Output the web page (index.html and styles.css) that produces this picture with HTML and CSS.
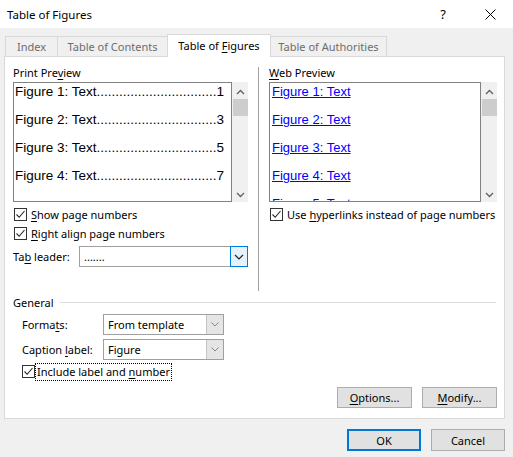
FILE: index.html
```html
<!DOCTYPE html>
<html lang="en">

<head>
    <meta charset="UTF-8">
    <title>Table of Figures</title>
    <link rel="stylesheet" href="styles.css">
</head>

<body>
    <div class="dialog">
        <div class="titlebar">
            <span class="title">Table of Figures</span>
            <span class="help">?</span>
            <svg class="close" width="11" height="11" viewBox="0 0 11 11">
                <path d="M0.5 0.5 L10.5 10.5 M10.5 0.5 L0.5 10.5" stroke="#000" stroke-width="1" fill="none" />
            </svg>
        </div>

        <ul class="tabs">
            <li><span>Index</span></li>
            <li><span>Table of Contents</span></li>
            <li class="active"><span>Table of <u>F</u>igures</span></li>
            <li><span>Table of Authorities</span></li>
        </ul>

        <div class="panel">
            <div class="top">
                <div class="col left">
                    <div class="label">Print Pre<u>v</u>iew</div>
                    <div class="listbox">
                        <div class="list print">
                            <div class="entry"><span>Figure 1: Text</span><span>................................</span><span>1</span></div>
                            <div class="entry"><span>Figure 2: Text</span><span>................................</span><span>3</span></div>
                            <div class="entry"><span>Figure 3: Text</span><span>................................</span><span>5</span></div>
                            <div class="entry"><span>Figure 4: Text</span><span>................................</span><span>7</span></div>
                        </div>
                        <div class="scrollbar">
                            <svg width="9" height="6" viewBox="0 0 9 6"><path d="M1 5 L4.5 1.5 L8 5" stroke="#606060" stroke-width="1.3" fill="none" /></svg>
                            <div class="thumb"></div>
                            <div class="spacer"></div>
                            <svg width="9" height="6" viewBox="0 0 9 6"><path d="M1 1 L4.5 4.5 L8 1" stroke="#606060" stroke-width="1.3" fill="none" /></svg>
                        </div>
                    </div>
                    <div class="check"><span class="box"><svg width="11" height="11" viewBox="0 0 11 11"><path d="M1.5 5.5 L4.2 8.3 L9.5 2" stroke="#222" stroke-width="1.1" fill="none" /></svg></span><span><u>S</u>how page numbers</span></div>
                    <div class="check"><span class="box"><svg width="11" height="11" viewBox="0 0 11 11"><path d="M1.5 5.5 L4.2 8.3 L9.5 2" stroke="#222" stroke-width="1.1" fill="none" /></svg></span><span><u>R</u>ight align page numbers</span></div>
                    <div class="row leader">
                        <span class="rowlabel">Ta<u>b</u> leader:</span>
                        <div class="combo focus">
                            <span class="value">.......</span>
                            <span class="arrow"><svg width="10" height="6" viewBox="0 0 10 6"><path d="M1 1 L5 5 L9 1" stroke="#222" stroke-width="1.2" fill="none" /></svg></span>
                        </div>
                    </div>
                </div>
                <div class="divider"></div>
                <div class="col right">
                    <div class="label"><u>W</u>eb Preview</div>
                    <div class="listbox">
                        <div class="list web">
                            <div class="link">Figure 1: Text</div>
                            <div class="link">Figure 2: Text</div>
                            <div class="link">Figure 3: Text</div>
                            <div class="link">Figure 4: Text</div>
                            <div class="link last">Figure 5: Text</div>
                        </div>
                        <div class="scrollbar">
                            <svg width="9" height="6" viewBox="0 0 9 6"><path d="M1 5 L4.5 1.5 L8 5" stroke="#606060" stroke-width="1.3" fill="none" /></svg>
                            <div class="thumb"></div>
                            <div class="spacer"></div>
                            <svg width="9" height="6" viewBox="0 0 9 6"><path d="M1 1 L4.5 4.5 L8 1" stroke="#606060" stroke-width="1.3" fill="none" /></svg>
                        </div>
                    </div>
                    <div class="check"><span class="box"><svg width="11" height="11" viewBox="0 0 11 11"><path d="M1.5 5.5 L4.2 8.3 L9.5 2" stroke="#222" stroke-width="1.1" fill="none" /></svg></span><span>Use <u>h</u>yperlinks instead of page numbers</span></div>
                </div>
            </div>

            <div class="general">
                <div class="group-title"><span>General</span></div>
                <div class="row first">
                    <span class="rowlabel">Forma<u>t</u>s:</span>
                    <div class="combo">
                        <span class="value">From template</span>
                        <span class="arrow"><svg width="8" height="5" viewBox="0 0 8 5"><path d="M0.5 0.5 L4 4 L7.5 0.5" stroke="#888" stroke-width="1" fill="none" /></svg></span>
                    </div>
                </div>
                <div class="row">
                    <span class="rowlabel">Caption <u>l</u>abel:</span>
                    <div class="combo">
                        <span class="value">Figure</span>
                        <span class="arrow"><svg width="8" height="5" viewBox="0 0 8 5"><path d="M0.5 0.5 L4 4 L7.5 0.5" stroke="#888" stroke-width="1" fill="none" /></svg></span>
                    </div>
                </div>
                <div class="check include"><span class="box"><svg width="11" height="11" viewBox="0 0 11 11"><path d="M1.5 5.5 L4.2 8.3 L9.5 2" stroke="#222" stroke-width="1.1" fill="none" /></svg></span><span class="focused">Include label and <u>n</u>umber</span></div>
            </div>

            <div class="panel-buttons">
                <button class="btn"><u>O</u>ptions...</button>
                <button class="btn"><u>M</u>odify...</button>
            </div>
        </div>

        <div class="footer">
            <button class="btn ok">OK</button>
            <button class="btn">Cancel</button>
        </div>
    </div>
</body>

</html>
```

FILE: styles.css
```css
* {
    margin: 0;
    padding: 0;
    box-sizing: border-box;
}

ul,
li {
    list-style: none;
}

body {
    width: 513px;
    height: 457px;
    background-color: #f0f0f0;
    font-family: "Noto Sans", "Open Sans", sans-serif;
    font-size: 11px;
    color: #000;
    white-space: nowrap;
    overflow: hidden;
}

u {
    text-decoration: underline;
    text-underline-offset: 2px;
}

.titlebar {
    height: 28px;
    background-color: #fff;
    display: flex;
    align-items: center;
    padding-left: 7px;
}

.title {
    flex: 1;
    font-size: 11.5px;
}

.help {
    font-size: 13px;
    margin-right: 39px;
}

.close {
    margin-right: 17px;
}

/* tabs */
.tabs {
    display: flex;
    align-items: flex-end;
    height: 28px;
    padding-left: 5px;
}

.tabs>li {
    height: 20px;
    border: 1px solid #d9d9d9;
    border-bottom: none;
    border-left: none;
    background-color: #f0f0f0;
    color: #6d6d6d;
    display: flex;
    align-items: center;
    justify-content: center;
}

.tabs>li:first-child {
    border-left: 1px solid #d9d9d9;
    width: 53px;
}

.tabs>li:nth-child(2) {
    width: 110px;
}

.tabs>li.active {
    width: 104px;
    height: 23px;
    background-color: #fff;
    color: #000;
    border-left: 1px solid #d9d9d9;
    margin-left: -1px;
    margin-bottom: -1px;
    position: relative;
    z-index: 1;
    padding-bottom: 2px;
}

.tabs>li:last-child {
    width: 116px;
}

/* panel */
.panel {
    margin: 0 8px 0 4px;
    height: 363px;
    background-color: #fff;
    border: 1px solid #d9d9d9;
    display: flex;
    flex-direction: column;
}

.top {
    display: flex;
    padding: 8px 0 0 8px;
    height: 237px;
}

.col {
    display: flex;
    flex-direction: column;
}

.left {
    width: 235px;
}

.right {
    width: 228px;
}

.divider {
    width: 1px;
    height: 224px;
    margin: 2px 10px 0 10px;
    background-color: #a0a0a0;
}

.label {
    height: 17px;
    line-height: 15px;
}

.listbox {
    display: flex;
    height: 120px;
}

.list {
    flex: 1;
    border: 1px solid #828282;
    overflow: hidden;
    padding: 0 10px 0 1px;
}

.print {
    font-family: "Liberation Sans", sans-serif;
    font-size: 13.5px;
}

.entry {
    display: flex;
    justify-content: space-between;
    height: 28px;
    line-height: 18px;
}

.web {
    font-family: "Liberation Sans", sans-serif;
    font-size: 13px;
    padding-left: 2px;
}

.link {
    height: 28px;
    line-height: 18px;
    color: #0000ff;
    text-decoration: underline;
}

.link.last {
    height: 6px;
    overflow: hidden;
}

.scrollbar {
    width: 16px;
    background-color: #f0f0f0;
    display: flex;
    flex-direction: column;
    align-items: center;
    padding-top: 7px;
    padding-bottom: 4px;
}

.thumb {
    width: 15px;
    height: 17px;
    margin-top: 4px;
    background-color: #cdcdcd;
}

.spacer {
    flex: 1;
}

.check {
    display: flex;
    align-items: center;
    height: 19px;
    gap: 4px;
    padding-left: 1px;
}

.listbox+.check {
    margin-top: 3px;
}

.box {
    width: 13px;
    height: 13px;
    border: 1px solid #333;
    background-color: #fff;
    display: flex;
    align-items: center;
    justify-content: center;
}

.row {
    display: flex;
    align-items: center;
    height: 25px;
}

.leader {
    margin-top: 1px;
}

.rowlabel {
    width: 66px;
}

.combo {
    flex: 1;
    height: 21px;
    border: 1px solid #a0a0a0;
    display: flex;
    align-items: stretch;
}

.combo .value {
    flex: 1;
    padding-left: 4px;
    display: flex;
    align-items: center;
}

.combo .arrow {
    width: 17px;
    background-color: #e5e5e5;
    border-left: 1px solid #c4c4c4;
    display: flex;
    align-items: center;
    justify-content: center;
}

.combo.focus .arrow {
    width: 18px;
    background-color: #e5f1fb;
    border: 1px solid #0078d7;
    margin: -1px -1px -1px 0;
}

/* general group */
.general {
    padding: 0 8px 0 8px;
}

.group-title {
    display: flex;
    align-items: center;
    height: 16px;
    gap: 6px;
}

.group-title::after {
    content: "";
    flex: 1;
    height: 1px;
    background-color: #dcdcdc;
}

.general .row {
    padding-left: 9px;
    height: 25px;
}

.general .row.first {
    margin-top: 2px;
}

.general .rowlabel {
    width: 81px;
}

.general .combo {
    flex: none;
    width: 121px;
}

.include {
    padding-left: 9px;
    height: 19px;
    gap: 1px;
}

.focused {
    outline: 1px dotted #000;
    padding: 0 1px;
    line-height: 16px;
}

.panel-buttons {
    display: flex;
    justify-content: flex-end;
    gap: 10px;
    padding: 6px 7px 0 0;
}

.btn {
    width: 75px;
    height: 21px;
    font-family: inherit;
    font-size: 11px;
    background-color: #e1e1e1;
    border: 1px solid #adadad;
    color: #000;
}

.footer {
    display: flex;
    justify-content: flex-end;
    gap: 10px;
    padding: 10px 8px 0 0;
}

.footer .btn {
    width: 74px;
    height: 22px;
}

.btn.ok {
    border: 2px solid #0078d7;
}
```
